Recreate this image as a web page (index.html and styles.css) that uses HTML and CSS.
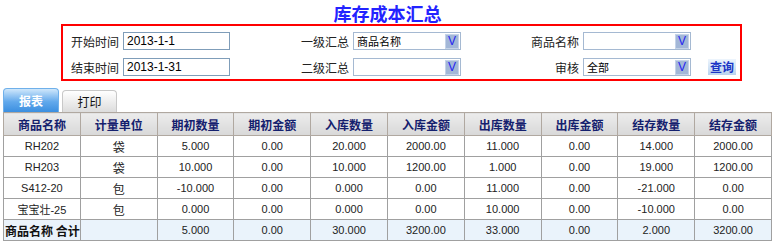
FILE: index.html
```html
<!DOCTYPE html>
<html lang="zh-CN">
<head>
    <meta charset="UTF-8">
    <title>库存成本汇总</title>
    <link rel="stylesheet" href="styles.css">
</head>
<body>
<div class="page">
    <h1 class="title">库存成本汇总</h1>

    <!-- 查询条件 -->
    <div class="filter">
        <label>开始时间</label>
        <input class="field" type="text" value="2013-1-1">
        <label>一级汇总</label>
        <div class="select"><span>商品名称</span><i>V</i></div>
        <label>商品名称</label>
        <div class="select"><span></span><i>V</i></div>
        <span></span>

        <label>结束时间</label>
        <input class="field" type="text" value="2013-1-31">
        <label>二级汇总</label>
        <div class="select"><span></span><i>V</i></div>
        <label>审核</label>
        <div class="select"><span>全部</span><i>V</i></div>
        <div><button class="query">查询</button></div>
    </div>

    <!-- 标签页 -->
    <div class="tabs">
        <div class="tab active">报表</div>
        <div class="tab">打印</div>
    </div>

    <table class="report">
        <thead>
        <tr>
            <th>商品名称</th>
            <th>计量单位</th>
            <th>期初数量</th>
            <th>期初金额</th>
            <th>入库数量</th>
            <th>入库金额</th>
            <th>出库数量</th>
            <th>出库金额</th>
            <th>结存数量</th>
            <th>结存金额</th>
        </tr>
        </thead>
        <tbody>
        <tr>
            <td>RH202</td><td class="cn">袋</td><td>5.000</td><td>0.00</td><td>20.000</td>
            <td>2000.00</td><td>11.000</td><td>0.00</td><td>14.000</td><td>2000.00</td>
        </tr>
        <tr>
            <td>RH203</td><td class="cn">袋</td><td>10.000</td><td>0.00</td><td>10.000</td>
            <td>1200.00</td><td>1.000</td><td>0.00</td><td>19.000</td><td>1200.00</td>
        </tr>
        <tr>
            <td>S412-20</td><td class="cn">包</td><td>-10.000</td><td>0.00</td><td>0.000</td>
            <td>0.00</td><td>11.000</td><td>0.00</td><td>-21.000</td><td>0.00</td>
        </tr>
        <tr>
            <td>宝宝壮-25</td><td class="cn">包</td><td>0.000</td><td>0.00</td><td>0.000</td>
            <td>0.00</td><td>10.000</td><td>0.00</td><td>-10.000</td><td>0.00</td>
        </tr>
        <tr class="total">
            <td class="total-name">商品名称&nbsp;合计</td><td></td><td>5.000</td><td>0.00</td><td>30.000</td>
            <td>3200.00</td><td>33.000</td><td>0.00</td><td>2.000</td><td>3200.00</td>
        </tr>
        </tbody>
    </table>
</div>
</body>
</html>
```

FILE: styles.css
```css
body {
    margin: 0;
    background: #fff;
    color: #222;
    font-family: "Liberation Sans", Arial, "Noto Sans CJK SC", sans-serif;
    font-size: 12px;
}

.page {
    padding: 0 3px;
}

.title {
    margin: 0;
    height: 24px;
    line-height: 26px;
    text-align: center;
    font-family: "Noto Sans CJK SC", sans-serif;
    font-size: 18px;
    font-weight: bold;
    color: #2323ff;
    letter-spacing: 0;
}

.filter {
    box-sizing: border-box;
    width: 681px;
    height: 57px;
    margin-left: 58px;
    padding-top: 6px;
    border: 2px solid #f00;
    display: grid;
    grid-template-columns: 60px 107px 123px 108px 122px 108px 1fr;
    grid-auto-rows: 18px;
    row-gap: 8px;
    align-items: center;
}

.filter label {
    text-align: right;
    padding-right: 4px;
    font-family: "Noto Sans CJK SC", sans-serif;
    font-size: 12px;
    color: #222;
}

.field {
    box-sizing: border-box;
    width: 107px;
    height: 18px;
    margin: 0;
    padding: 0 3px;
    border: 1px solid #7f9db9;
    font-family: "Liberation Sans", Arial, sans-serif;
    font-size: 12px;
    color: #000;
}

.select {
    box-sizing: border-box;
    width: 108px;
    height: 18px;
    border: 1px solid #a5b9d2;
    background: #fff;
    display: flex;
    align-items: center;
    justify-content: space-between;
    padding-left: 3px;
    padding-right: 1px;
}

.select span {
    font-family: "Noto Sans CJK SC", sans-serif;
    font-size: 11px;
    color: #000;
}

.select i {
    box-sizing: border-box;
    width: 14px;
    height: 15px;
    background: #a3b7d7;
    border: 1px solid #c5d3e8;
    color: #2424f0;
    font-style: normal;
    font-family: "Liberation Sans", Arial, sans-serif;
    font-size: 12px;
    line-height: 13px;
    text-align: center;
}

.query {
    margin-left: 17px;
    width: 28px;
    height: 16px;
    padding: 0;
    border: none;
    background: linear-gradient(#eef5fd, #b9d3ef);
    color: #1b35c6;
    font-family: "Noto Sans CJK SC", sans-serif;
    font-size: 12px;
    font-weight: bold;
    line-height: 16px;
}

.tabs {
    display: flex;
    align-items: flex-end;
    gap: 3px;
    height: 24px;
    margin-top: 7px;
}

.tab {
    box-sizing: border-box;
    height: 22px;
    width: 55px;
    border: 1px solid #c8c8c8;
    border-bottom: none;
    border-radius: 4px 4px 0 0;
    background: linear-gradient(#ffffff, #dcdcdc);
    text-align: center;
    line-height: 21px;
    font-family: "Noto Sans CJK SC", sans-serif;
    font-size: 12px;
    color: #111;
}

.tab.active {
    width: 56px;
    height: 24px;
    border-color: #6fb0ea;
    background: linear-gradient(#cfe7fb, #62a9ec 55%, #3b8fe0);
    color: #fff;
    font-weight: bold;
    line-height: 23px;
}

.report {
    width: 769px;
    border-collapse: collapse;
    table-layout: fixed;
    border: 1px solid #b69272;
    border-top-color: #a9c1dc;
}

.report th {
    height: 22px;
    padding: 0;
    border: 1px solid #b0a8a0;
    background: linear-gradient(#ececec, #d8d8d8);
    color: #14206e;
    font-family: "Noto Sans CJK SC", sans-serif;
    font-size: 12px;
    font-weight: bold;
}

.report td {
    height: 20px;
    padding: 0;
    border: 1px solid #a0a0a0;
    text-align: center;
    font-size: 11px;
    color: #222;
}

.report td.cn {
    font-family: "Noto Sans CJK SC", sans-serif;
    font-size: 12px;
}

.report tr.total td {
    background: #eaf3fb;
}

.report td.total-name {
    text-align: left;
    padding-left: 1px;
    font-family: "Noto Sans CJK SC", sans-serif;
    font-size: 12px;
    font-weight: bold;
    color: #111;
    white-space: nowrap;
}
```
